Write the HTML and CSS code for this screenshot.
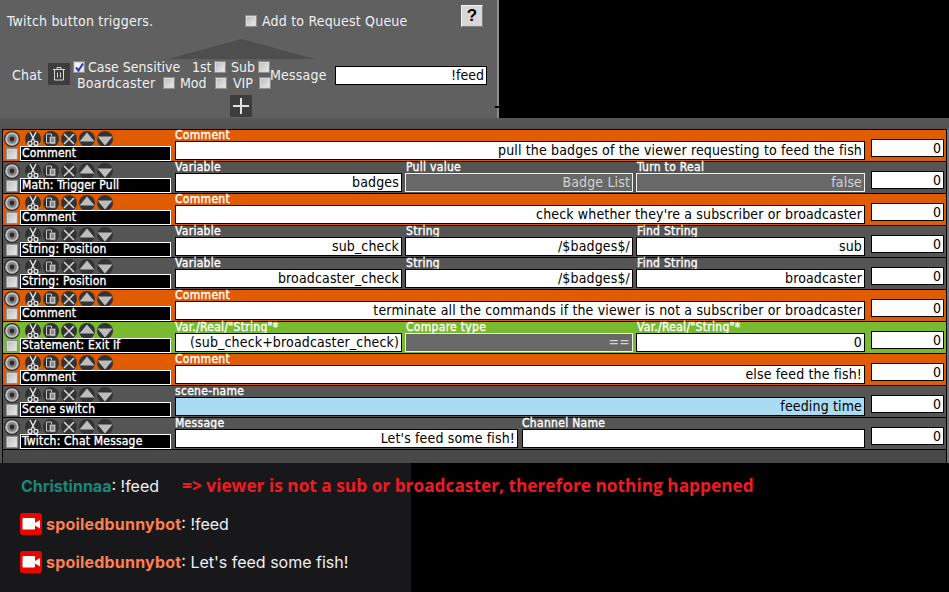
FILE: index.html
```html
<!DOCTYPE html>
<html lang="en">
<head>
<meta charset="utf-8">
<title>Twitch button triggers</title>
<link rel="stylesheet" href="styles.css">
</head>
<body>
<svg class="defs" width="0" height="0" aria-hidden="true">
  <symbol id="i-gear" viewBox="0 0 16 16">
    <circle cx="8" cy="8" r="8" fill="#2e2e2e"/>
    <circle cx="8" cy="8" r="6.800" fill="#c0c0c0"/>
    <circle cx="8" cy="8" r="4.800" fill="#808080"/>
    <circle cx="8" cy="8" r="2.400" fill="#2a2a2a"/>
  </symbol>
  <symbol id="i-cut" viewBox="0 0 16 16">
    <circle cx="8" cy="8" r="8" fill="#333"/>
    <path d="M5 1l4.600 9M11 1L6.400 10" stroke="#e8e8e8" stroke-width="1.400" fill="none"/>
    <circle cx="5" cy="12.400" r="2" stroke="#e8e8e8" stroke-width="1.300" fill="none"/>
    <circle cx="11" cy="12.400" r="2" stroke="#e8e8e8" stroke-width="1.300" fill="none"/>
  </symbol>
  <symbol id="i-copy" viewBox="0 0 16 16">
    <circle cx="8" cy="8" r="8" fill="#333"/>
    <path d="M3.500 3h5v9h-5z" fill="#333" stroke="#c8c8c8"/>
    <path d="M6.500 5.500h6v7.500h-6z" fill="#c8c8c8" stroke="#555" stroke-width=".6"/>
    <path d="M8 8h3M8 10h3" stroke="#444"/>
  </symbol>
  <symbol id="i-x" viewBox="0 0 16 16">
    <circle cx="8" cy="8" r="8" fill="#333"/>
    <path d="M3 3l10 10M13 3L3 13" stroke="#d4d4d4" stroke-width="1.600"/>
  </symbol>
  <symbol id="i-up" viewBox="0 0 16 16">
    <circle cx="8" cy="8" r="8" fill="#333"/>
    <path d="M8 1.500L15.500 10.500H.5z" fill="#bdbdbd"/>
  </symbol>
  <symbol id="i-down" viewBox="0 0 16 16">
    <circle cx="8" cy="8" r="8" fill="#333"/>
    <path d="M.5 5.500H15.500L8 14.500z" fill="#bdbdbd"/>
  </symbol>
  <symbol id="i-cam" viewBox="0 0 22 22">
    <rect width="22" height="22" rx="3" fill="#eb0400"/>
    <path d="M3 5.500h11.500v10.500H3z" fill="#fff" stroke="#fff" stroke-linejoin="round"/>
    <path d="M15 10l5-3v8.500l-5-3z" fill="#fff"/>
  </symbol>
</svg>

<section class="top">
  <div class="top-head">
    <span class="top-title">Twitch button triggers.</span>
    <label class="queue"><span class="cb"></span>Add to Request Queue</label>
    <span class="help">?</span>
  </div>
  <div class="arrow"></div>
  <div class="trigger">
    <span class="chat-label">Chat</span>
    <span class="trash">
      <svg width="14" height="16" viewBox="0 0 14 16"><path d="M1 3.500h12M5 3.500V1.500h4v2M2.500 3.500v10.500h9V3.500M5.500 6.500v5M8.500 6.500v5" stroke="#d8d8d8" fill="none"/></svg>
    </span>
    <div class="opts">
      <div class="opts-row one">
        <span class="cb on"><svg width="11" height="11" viewBox="0 0 11 11"><path d="M2 5.500l2.500 3L9 1.500" stroke="#2a35b8" stroke-width="2" fill="none"/></svg></span>
        <span class="o-case">Case Sensitive</span>
        <span class="o-1st">1st</span><span class="cb"></span>
        <span class="o-sub">Sub</span><span class="cb"></span>
      </div>
      <div class="opts-row two">
        <span class="o-board">Boardcaster</span><span class="cb"></span>
        <span class="o-mod">Mod</span><span class="cb"></span>
        <span class="o-vip">VIP</span><span class="cb"></span>
      </div>
    </div>
    <span class="msg-label">Message</span>
    <span class="msg-input">!feed</span>
  </div>
  <div class="plus-wrap">
    <span class="plus"><svg width="16" height="16" viewBox="0 0 16 16"><path d="M8 0v16M0 8h16" stroke="#e0e0e0" stroke-width="2"/></svg></span>
  </div>
</section>
<div class="band"></div>

<div class="list-wrap">
<section class="list">
  <div class="row orange">
    <div class="tools"><div class="btns"><svg class="gear"><use href="#i-gear"/></svg><svg class="tb"><use href="#i-cut"/></svg><svg class="tb"><use href="#i-copy"/></svg><svg class="tb"><use href="#i-x"/></svg><svg class="tb"><use href="#i-up"/></svg><svg class="tb"><use href="#i-down"/></svg></div><div class="namebar"><span class="cb"></span><span class="name">Comment</span></div></div>
    <div class="fields"><div class="field w-full"><span class="lab">Comment</span><span class="inp">pull the badges of the viewer requesting to feed the fish</span></div></div>
    <span class="num">0</span>
  </div>
  <div class="row gray">
    <div class="tools"><div class="btns"><svg class="gear"><use href="#i-gear"/></svg><svg class="tb"><use href="#i-cut"/></svg><svg class="tb"><use href="#i-copy"/></svg><svg class="tb"><use href="#i-x"/></svg><svg class="tb"><use href="#i-up"/></svg><svg class="tb"><use href="#i-down"/></svg></div><div class="namebar"><span class="cb"></span><span class="name">Math: Trigger Pull</span></div></div>
    <div class="fields"><div class="field w-a"><span class="lab">Variable</span><span class="inp">badges</span></div><div class="field w-b"><span class="lab">Pull value</span><span class="inp off">Badge List</span></div><div class="field w-c"><span class="lab">Turn to Real</span><span class="inp off">false</span></div></div>
    <span class="num">0</span>
  </div>
  <div class="row orange">
    <div class="tools"><div class="btns"><svg class="gear"><use href="#i-gear"/></svg><svg class="tb"><use href="#i-cut"/></svg><svg class="tb"><use href="#i-copy"/></svg><svg class="tb"><use href="#i-x"/></svg><svg class="tb"><use href="#i-up"/></svg><svg class="tb"><use href="#i-down"/></svg></div><div class="namebar"><span class="cb"></span><span class="name">Comment</span></div></div>
    <div class="fields"><div class="field w-full"><span class="lab">Comment</span><span class="inp">check whether they're a subscriber or broadcaster</span></div></div>
    <span class="num">0</span>
  </div>
  <div class="row gray">
    <div class="tools"><div class="btns"><svg class="gear"><use href="#i-gear"/></svg><svg class="tb"><use href="#i-cut"/></svg><svg class="tb"><use href="#i-copy"/></svg><svg class="tb"><use href="#i-x"/></svg><svg class="tb"><use href="#i-up"/></svg><svg class="tb"><use href="#i-down"/></svg></div><div class="namebar"><span class="cb"></span><span class="name">String: Position</span></div></div>
    <div class="fields"><div class="field w-a"><span class="lab">Variable</span><span class="inp">sub_check</span></div><div class="field w-b"><span class="lab">String</span><span class="inp">/$badges$/</span></div><div class="field w-c"><span class="lab">Find String</span><span class="inp">sub</span></div></div>
    <span class="num">0</span>
  </div>
  <div class="row gray">
    <div class="tools"><div class="btns"><svg class="gear"><use href="#i-gear"/></svg><svg class="tb"><use href="#i-cut"/></svg><svg class="tb"><use href="#i-copy"/></svg><svg class="tb"><use href="#i-x"/></svg><svg class="tb"><use href="#i-up"/></svg><svg class="tb"><use href="#i-down"/></svg></div><div class="namebar"><span class="cb"></span><span class="name">String: Position</span></div></div>
    <div class="fields"><div class="field w-a"><span class="lab">Variable</span><span class="inp">broadcaster_check</span></div><div class="field w-b"><span class="lab">String</span><span class="inp">/$badges$/</span></div><div class="field w-c"><span class="lab">Find String</span><span class="inp">broadcaster</span></div></div>
    <span class="num">0</span>
  </div>
  <div class="row orange">
    <div class="tools"><div class="btns"><svg class="gear"><use href="#i-gear"/></svg><svg class="tb"><use href="#i-cut"/></svg><svg class="tb"><use href="#i-copy"/></svg><svg class="tb"><use href="#i-x"/></svg><svg class="tb"><use href="#i-up"/></svg><svg class="tb"><use href="#i-down"/></svg></div><div class="namebar"><span class="cb"></span><span class="name">Comment</span></div></div>
    <div class="fields"><div class="field w-full"><span class="lab">Comment</span><span class="inp">terminate all the commands if the viewer is not a subscriber or broadcaster</span></div></div>
    <span class="num">0</span>
  </div>
  <div class="row green">
    <div class="tools"><div class="btns"><svg class="gear"><use href="#i-gear"/></svg><svg class="tb"><use href="#i-cut"/></svg><svg class="tb"><use href="#i-copy"/></svg><svg class="tb"><use href="#i-x"/></svg><svg class="tb"><use href="#i-up"/></svg><svg class="tb"><use href="#i-down"/></svg></div><div class="namebar"><span class="cb"></span><span class="name">Statement: Exit If</span></div></div>
    <div class="fields"><div class="field w-a"><span class="lab">Var./Real/"String"*</span><span class="inp">(sub_check+broadcaster_check)</span></div><div class="field w-b"><span class="lab">Compare type</span><span class="inp off">==</span></div><div class="field w-c"><span class="lab">Var./Real/"String"*</span><span class="inp">0</span></div></div>
    <span class="num">0</span>
  </div>
  <div class="row orange">
    <div class="tools"><div class="btns"><svg class="gear"><use href="#i-gear"/></svg><svg class="tb"><use href="#i-cut"/></svg><svg class="tb"><use href="#i-copy"/></svg><svg class="tb"><use href="#i-x"/></svg><svg class="tb"><use href="#i-up"/></svg><svg class="tb"><use href="#i-down"/></svg></div><div class="namebar"><span class="cb"></span><span class="name">Comment</span></div></div>
    <div class="fields"><div class="field w-full"><span class="lab">Comment</span><span class="inp">else feed the fish!</span></div></div>
    <span class="num">0</span>
  </div>
  <div class="row gray">
    <div class="tools"><div class="btns"><svg class="gear"><use href="#i-gear"/></svg><svg class="tb"><use href="#i-cut"/></svg><svg class="tb"><use href="#i-copy"/></svg><svg class="tb"><use href="#i-x"/></svg><svg class="tb"><use href="#i-up"/></svg><svg class="tb"><use href="#i-down"/></svg></div><div class="namebar"><span class="cb"></span><span class="name">Scene switch</span></div></div>
    <div class="fields"><div class="field w-full"><span class="lab">scene-name</span><span class="inp blue">feeding time</span></div></div>
    <span class="num">0</span>
  </div>
  <div class="row gray">
    <div class="tools"><div class="btns"><svg class="gear"><use href="#i-gear"/></svg><svg class="tb"><use href="#i-cut"/></svg><svg class="tb"><use href="#i-copy"/></svg><svg class="tb"><use href="#i-x"/></svg><svg class="tb"><use href="#i-up"/></svg><svg class="tb"><use href="#i-down"/></svg></div><div class="namebar"><span class="cb"></span><span class="name">Twitch: Chat Message</span></div></div>
    <div class="fields"><div class="field w-half"><span class="lab">Message</span><span class="inp">Let's feed some fish!</span></div><div class="field w-half2"><span class="lab">Channel Name</span><span class="inp"></span></div></div>
    <span class="num">0</span>
  </div>
</section>
</div>

<section class="chat">
  <p class="line first"><span class="who teal">Christinnaa</span>: !feed<span class="note">=&gt; viewer is not a sub or broadcaster, therefore nothing happened</span></p>
  <p class="line"><svg class="badge"><use href="#i-cam"/></svg><span class="who coral">spoiledbunnybot</span>: !feed</p>
  <p class="line"><svg class="badge"><use href="#i-cam"/></svg><span class="who coral">spoiledbunnybot</span>: Let's feed some fish!</p>
</section>
</body>
</html>
```

FILE: styles.css
```css
* { box-sizing: border-box; }
html, body { margin: 0; padding: 0; }
body {
  width: 949px;
  height: 592px;
  overflow: hidden;
  background: #000;
  font-family: "DejaVu Sans Condensed", "DejaVu Sans", sans-serif;
}
.defs { position: absolute; }

/* top panel */
.top {
  position: relative;
  width: 499px;
  height: 118px;
  background: #606060;
  border-right: 2px solid #8c8c8c;
  color: #f0f0f0;
  font-size: 14px;
  letter-spacing: 0.2px;
}
.top::after {
  content: "";
  position: absolute;
  left: 495px;
  top: 106px;
  width: 4px;
  height: 2px;
  background: #000;
}
.top-head {
  display: flex;
  align-items: center;
  height: 27px;
  padding: 5px 0 0 7px;
}
.top-title { width: 238px; margin-top: 10px; }
.queue { display: flex; align-items: center; gap: 5px; width: 216px; margin-top: 10px; }
.help {
  width: 22px;
  height: 22px;
  background: #d8d8d8;
  border: 1px solid;
  border-color: #f4f4f4 #808080 #808080 #f4f4f4;
  color: #000;
  font: bold 17px/20px "Liberation Sans", sans-serif;
  text-align: center;
}
.arrow {
  position: absolute;
  left: 168px;
  top: 39px;
  width: 147px;
  height: 20px;
  background: #4e4e4e;
  clip-path: polygon(50% 0, 100% 100%, 0 100%);
}
.trigger {
  position: relative;
  display: flex;
  align-items: center;
  height: 28px;
  margin-top: 34px;
  padding-left: 12px;
}
.chat-label { width: 36px; }
.trash {
  display: flex;
  align-items: center;
  justify-content: center;
  width: 22px;
  height: 22px;
  margin-top: -2px;
  background: #3d3d3d;
}
.opts { width: 200px; margin: -2px 0 0 3px; height: 28px; }
.opts-row { display: flex; align-items: center; height: 14px; line-height: 14px; }
.opts-row .cb { flex: none; }
.o-case { margin-left: 3px; width: 104px; letter-spacing: 0; }
.o-1st { width: 22px; letter-spacing: 0; }
.o-sub { margin-left: 5px; width: 27px; letter-spacing: 0; }
.opts-row.two { padding-left: 4px; margin-top: 2px; }
.o-board { width: 86px; }
.o-mod { margin-left: 5px; width: 35px; letter-spacing: 0; }
.o-vip { margin-left: 6px; width: 26px; letter-spacing: 0; }
.msg-label { width: 65px; margin-left: -3px; }
.msg-input {
  width: 152px;
  height: 19px;
  margin-top: 1px;
  background: #fff;
  border: 1px solid #000;
  color: #000;
  text-align: right;
  line-height: 17px;
  padding-right: 2px;
  font-size: 14px;
  letter-spacing: 0;
}
.plus-wrap { display: flex; justify-content: center; padding: 6px 0 0 0; margin-left: -15px; }
.plus {
  display: flex;
  align-items: center;
  justify-content: center;
  width: 22px;
  height: 22px;
  background: #3d3d3d;
}
.cb {
  display: inline-block;
  flex: none;
  width: 12px;
  height: 12px;
  background: linear-gradient(135deg, #b8b8b8, #eeeeee);
  border: 1px solid #8e8e8e;
  box-shadow: inset 0 0 0 1px #d8d8d8;
}
.cb.on { background: #f2f2f2; }
.cb.on svg { display: block; margin: -0.5px; }

.band { height: 11px; background: linear-gradient(#585858, #505050); }

/* command list */
.list-wrap {
  width: 949px;
  height: 334px;
  padding-left: 2px;
  background: #525252;
  border-right: 3px solid #747474;
}
.list {
  width: 945px;
  height: 334px;
  background: #484848;
  border-left: 1px solid #000;
  border-right: 1px solid #000;
  border-top: 1px solid #000;
}
.row {
  display: flex;
  height: 32px;
  border-bottom: 1px solid #000;
  color: #fff;
}
.orange { background: #e15b00; }
.gray { background: #555; }
.green { background: #78bb30; }
.tools { width: 172px; flex: none; position: relative; }
.btns { display: flex; align-items: center; height: 17px; padding: 1px 0 0 1px; }
.gear { width: 16px; height: 16px; margin-right: 5px; }
.tb { width: 16px; height: 16px; margin-right: 2px; }
.namebar { display: flex; align-items: center; padding-left: 3px; margin-top: -1px; }
.namebar .cb { margin-right: 2px; }
.name {
  width: 151px;
  height: 15px;
  background: #000;
  border: 1px solid #fff;
  font-size: 12px;
  letter-spacing: 0.2px;
  -webkit-text-stroke: 0.35px #fff;
  line-height: 13px;
  padding-left: 1px;
  white-space: nowrap;
  overflow: hidden;
}
.fields { display: flex; width: 691px; flex: none; }
.field { display: flex; flex-direction: column; }
.w-full { width: 690px; }
.w-a { width: 227px; margin-right: 3px; }
.w-b { width: 228px; margin-right: 3px; }
.w-c { width: 229px; }
.w-half { width: 343px; margin-right: 4px; }
.w-half2 { width: 343px; }
.w-b .lab, .w-c .lab { padding-left: 1px; }
.lab {
  height: 11px;
  font-size: 12px;
  letter-spacing: 0.3px;
  -webkit-text-stroke: 0.35px #fff;
  line-height: 11px;
  white-space: nowrap;
}
.inp {
  height: 19px;
  background: #fff;
  border: 1px solid #000;
  color: #000;
  font-size: 14px;
  letter-spacing: 0.15px;
  line-height: 17px;
  text-align: right;
  padding-right: 2px;
  white-space: nowrap;
  overflow: hidden;
}
.inp.off { background: #686868; border-color: #f0f0f0; color: #d4d4d4; }
.inp.blue { background: #a9dbf2; }
.num {
  width: 73px;
  height: 18px;
  margin: 9px 0 0 5px;
  flex: none;
  background: #fff;
  border: 1px solid #000;
  color: #000;
  font-size: 14px;
  line-height: 16px;
  text-align: right;
  padding-right: 2px;
}

/* chat */
.chat {
  width: 411px;
  height: 129px;
  padding: 12px 0 0 20px;
  background: #18181b;
  color: #efeff1;
  font: 16px/22px Inter, sans-serif;
}
.line {
  display: flex;
  align-items: center;
  height: 22px;
  margin: 0 0 16px;
  white-space: nowrap;
}
.first { padding-left: 1px; }
.who { font-weight: 700; }
.teal { color: #17897a; }
.coral { color: #ff7f50; letter-spacing: 0.2px; }
.badge { width: 22px; height: 22px; margin-right: 4px; flex: none; }
.note {
  margin-left: 23px;
  color: #ed1c24;
  font: bold 17.3px/22px "Open Sans", sans-serif;
}
```
